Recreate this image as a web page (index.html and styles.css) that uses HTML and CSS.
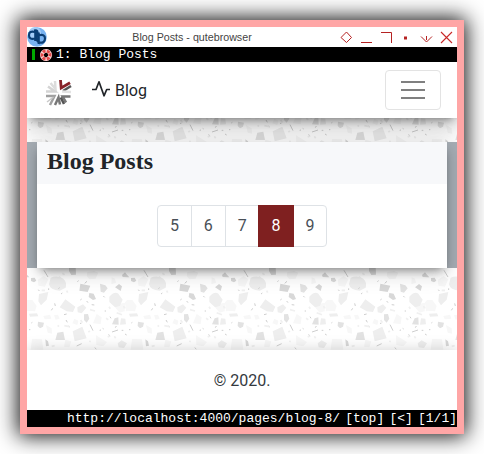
FILE: index.html
```html
<!DOCTYPE html>
<html lang="en">
<head>
<meta charset="utf-8">
<title>Blog Posts</title>
<link rel="stylesheet" href="styles.css">
</head>
<body>
<div class="window">
  <header class="titlebar">
    <svg class="app-icon" width="20" height="20" viewBox="0 0 20 20">
      <circle cx="10" cy="10" r="9.8" fill="#78b3f2"/><circle cx="8" cy="6" r="6" fill="#a5cdf8"/>
      <g fill="none" stroke="#0b3e74" stroke-width="2.200"><path d="M8.300 2.500V14M8 5Q2 3.500 2 8.200T8 11.500M11.700 5.500V17M12 8.300q6-1.500 6 3.300t-6 4M7 3.500q5-1 3 4.500T13 16.500"/></g>
    </svg>
    <span class="window-title">Blog Posts - qutebrowser</span>
    <svg class="controls" width="117" height="20" viewBox="0 0 117 20" fill="none" stroke="#b52222">
      <path d="M6.500 5l5 5.500-5 5-5.500-5z" stroke-width="1"/>
      <path d="M21 15.500h11M41 5.500h10.500V16"/>
      <path d="M64 9.500h3v3h-3z" fill="#b52222" stroke="none"/>
      <path d="M81 9.500l5.500 5.500 5.500-5.500M86.500 9v4"/>
      <path d="M101 5l11 11M112 5l-11 11" stroke="#c82828" stroke-width="1.100"/>
    </svg>
  </header>
  <div class="tabbar">
    <span class="tab-state"></span>
    <svg class="favicon" width="14" height="14" viewBox="0 0 14 14"><g transform="rotate(-25 7 7)"><circle cx="7" cy="7" r="4.100" fill="none" stroke="#f6d0d0" stroke-width="4"/><circle cx="7" cy="7" r="4" fill="none" stroke="#e34a4a" stroke-width="3" stroke-dasharray="2.900 1.290"/></g></svg>
    <span>1: Blog Posts</span>
  </div>
  <div class="page">
    <nav class="navbar">
      <svg class="brand" width="28" height="28" viewBox="0 0 28 28" fill="none" stroke-width="2.500">
        <path d="M6.500 4l5 6-.500-8" stroke="#dcdcdc"/>
        <path d="M2 12.500h9L4 7.500" stroke="#d4d4d4"/>
        <path d="M19 12l8-5" stroke="#555"/>
        <path d="M18 12.500l9 .500" stroke="#e2e2e2"/>
        <path d="M16.500 1l.700 8L26 3.800" stroke="#872228" stroke-width="2.800"/>
        <path d="M26.500 17.500h-8l3.500 6" stroke="#777"/>
        <path d="M20 25l-3.300-6.500" stroke="#555"/>
        <path d="M11 26l3.500-7.500 1.500 7" stroke="#777"/>
        <path d="M2 17h8.500L6 26" stroke="#a0a0a0"/>
        <path d="M3 23l6.500-5" stroke="#c8c8c8" stroke-width="1.500"/>
      </svg>
      <a class="nav-link">
        <svg width="18" height="18" viewBox="0 0 18 18" fill="none" stroke="#212529" stroke-width="1.700" stroke-linejoin="round"><path d="M0 9.500h4L7 1.800l5 14 2.700-6.300H18"/></svg>
        <span>Blog</span>
      </a>
      <button class="toggler" aria-label="Menu"><i></i><i></i><i></i></button>
    </nav>
    <main class="content">
      <article class="card">
        <h1 class="card-header">Blog Posts</h1>
        <div class="pagination">
          <a>5</a><a>6</a><a>7</a><a class="active">8</a><a>9</a>
        </div>
      </article>
    </main>
    <footer class="footer">© 2020.</footer>
  </div>
  <div class="statusbar"><span>http://localhost:4000/pages/blog-8/</span><span>[top]</span><span>[&lt;]</span><span>[1/1]</span></div>
</div>
</body>
</html>
```

FILE: styles.css
```css
* { box-sizing: border-box; }
body { margin: 0; padding: 20px; background: #fff; overflow: hidden; }
.window {
  width: 444px; height: 414px; border: 7px solid #ffa6a6;
  display: flex; flex-direction: column;
  box-shadow: 0 0 20px 2px rgba(0,0,0,.95);
}
.titlebar { height: 20px; display: flex; align-items: center; background: #fff; }
.window-title { flex: 1; text-align: center; font: 10.700px "Liberation Sans", sans-serif; color: #444; }
.app-icon { margin-right: 1px; }
.controls { margin-left: 4px; }
.tabbar {
  height: 15px; display: flex; align-items: center; background: #000; color: #fff;
  font: 13px/15px "Liberation Mono", monospace; padding-left: 5px;
}
.tab-state { width: 3px; height: 11px; background: #00aa00; }
.favicon { margin: 1px 3px 0 4px; }
.page {
  height: 348px; display: flex; flex-direction: column; overflow: hidden;
  font-family: Roboto, sans-serif; font-size: 16px;
  background: #fff url("data:image/svg+xml,%3Csvg xmlns='http://www.w3.org/2000/svg' width='100' height='100' viewBox='81 66 300 300'%3E%3Cg fill='%23f7f7f7'%3E%3Cpath d='M81 180l16 0 13 18-5 16-24-2zM381 180v32l-6-8zM114 119l17-11 14 10-10 22-20-3zM262 96l20-3 13 5-8 18-19 2-8-10zM335 112l10 4 3 12-14 5zM375 187l6-7v34l-7-2zM290 222l15 10-3 20-23-2zM138 255l17 10 1 16-13-3zM96 297l30 1 4 31H92zM288 286l33 20-11 13-21-4zM196 299l18 5-6 18-16-2zM130 228l20-4 4 12-20 2zM375 188q-30 4-29 15l13 15 19-6zM223 236l12 6-3 13-15-5zM162 226l12-2 5 12-12 3z'/%3E%3C/g%3E%3Cg fill='%23eeeeee'%3E%3Cpath d='M152 113q20-8 38 3 12 12 7 27l-18 9q-29-2-32-19zM117 162l28-6-5 23-17 17-8-12zM179 202l17-24 12 9 18 13-7 16-19-2zM328 170q15-17 27-9l13 18-8 18-15 5-17-16zM232 202l17-9 10 10-14 17-12-3zM218 274l29-14 13 35-36 9zM353 310l12-9 16 9-9 14-16-2zM87 221l24-1 4 9-25 1zM363 235l13 1 2 17-18 1z'/%3E%3C/g%3E%3Cg fill='%23e2e2e2'%3E%3Cpath d='M300 131l16 5 7 9-11 13-10-3zM252 223l12-1 4 14-8 12-8-8zM114 245l18 3-3 12-9 5-7-7zM172 278l18-3 5 25-29 0zM344 235l11-3 1 22-20-1z'/%3E%3C/g%3E%3Cg fill='%23d8d8d8'%3E%3Cpath d='M207 78l20 2 1 24-14 1-7-12zM241 131l30 6-8 19-25-4zM268 159l13 2 7 16-9 3-13-9zM366 105l9-8 6 7v8l-13-1zM81 104l7 8-7 0zM93 114l11-1 5 9-7 5-9-4zM345 142l12-10 9 7-4 14zM136 298l8 6 3 13-9 2z'/%3E%3C/g%3E%3Cg stroke='%23cecece' stroke-width='3' fill='none'%3E%3Cpath d='M132 91l12 20M270 254l9 18M260 183l4 5M164 190l2 8M275 194l8 1M232 125l4-3M254 130l7-6M230 318l15-7M336 276l18-6M299 271l4-1M115 149l3 4M310 168l4 4M183 162l4-3M146 145v5M192 224l8-2M154 211l4-6M241 180l4-3M314 213h4M94 249l3-2M198 240l4 7M205 258l4 3M240 250h4M175 146l4-3M308 265l3 2M346 263l3-5M87 269h4M330 230l3 5M284 323l5 4M325 284l5 3M365 271h5M375 282l5 3'/%3E%3C/g%3E%3Cg stroke='%23f0f0f0' stroke-width='5' fill='none'%3E%3Cpath d='M187 100l7 4M177 110l6 5M125 151h10M200 152l3 6M270 209l15 4M327 200l4 6M371 198l3 7M350 218l16 6M193 257l15 3M242 240l5 8M318 235l7 4M155 319l9-2M268 303l4 2M343 289l4 6M173 256l4 4M265 276l5-3M323 291l8-3'/%3E%3C/g%3E%3C/svg%3E") 0 0 / 100px 100px;
}
.navbar {
  height: 56px; display: flex; align-items: center; background: #fff; padding: 0 16px;
  box-shadow: 0 5px 10px -4px rgba(0,0,0,.5), 0 12px 24px 2px rgba(0,0,0,.16); flex: none;
}
.brand { margin: 6px 19px 0 1px; }
.nav-link { display: flex; align-items: center; gap: 5px; color: #212529; }
.nav-link svg { margin: -3px 0 0 1px; }
.toggler {
  margin-left: auto; width: 56px; height: 40px; border: 1px solid #e3e3e3; border-radius: 4px;
  background: transparent; padding: 0 15px; display: flex; flex-direction: column; justify-content: center; gap: 6px;
}
.toggler i { height: 2px; background: #808080; }
.content {
  height: 126px; margin-top: 24px; padding: 0 10px; background: #a5acb3; flex: none;
}
.card { height: 126px; background: #fff; box-shadow: 0 5px 10px -4px rgba(0,0,0,.5), 0 6px 20px rgba(0,0,0,.14); }
.card-header {
  margin: 0; height: 42px; padding-left: 10px; background: #f7f8fa; color: #212529;
  font: bold 24px/38px "Liberation Serif", serif;
}
.pagination { display: flex; margin-top: 21px; padding-left: 120px; }
.pagination a {
  width: 34.900px; text-align: center; padding: 8px 0; line-height: 24px;
  border: 1px solid #dee2e6; margin-left: -1px; color: #495057; background: #fff;
}
.pagination a:first-child { border-radius: 4px 0 0 4px; margin-left: 0; }
.pagination a:last-child { border-radius: 0 4px 4px 0; }
.pagination a.active { background: #7f2020; border-color: #7f2020; color: #fff; position: relative; margin-left: -1.400px; width: 35.300px; }
.footer {
  height: 60px; margin-top: auto; background: #fff; color: #343a40; text-align: center; line-height: 61px;
  box-shadow: 0 0 14px rgba(0,0,0,.18); flex: none;
}
.statusbar {
  height: 17px; display: flex; justify-content: flex-end; gap: 5.200px; background: #000; color: #fff;
  font: 13px/17px "Liberation Mono", monospace; white-space: nowrap;
}
```
